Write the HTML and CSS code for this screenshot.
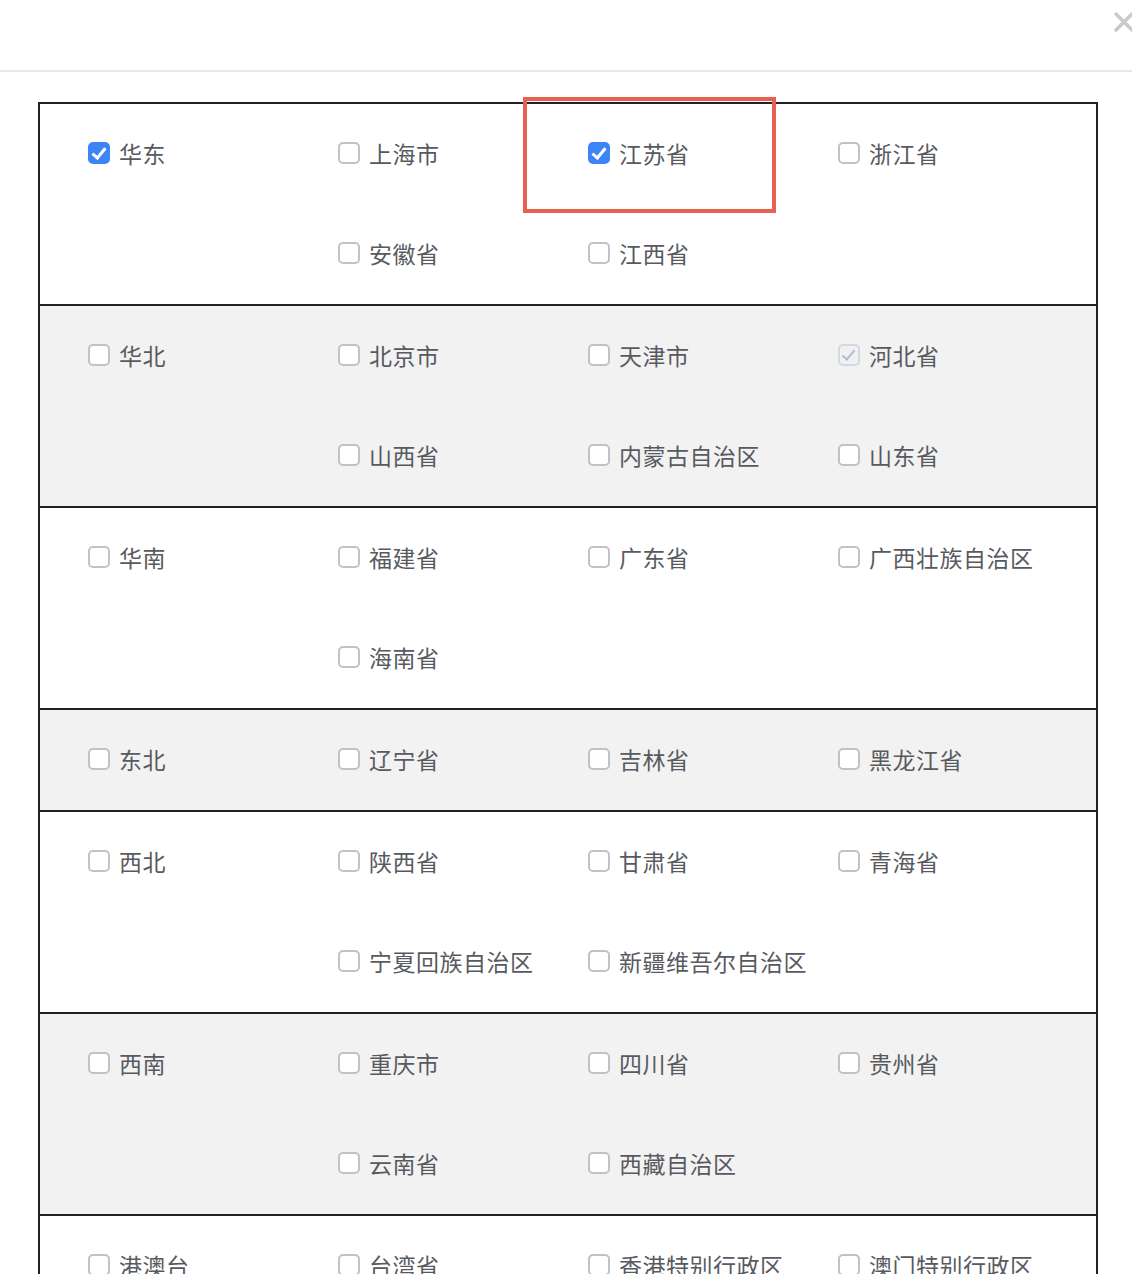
FILE: index.html
```html
<!DOCTYPE html>
<html lang="zh-CN">
<head>
  <meta charset="UTF-8">
  <meta name="viewport" content="width=device-width, initial-scale=1.0">
  <title>选择地区</title>
  <link rel="stylesheet" href="styles.css">
</head>
<body>

  <header class="dialog-header">
    <button class="close" aria-label="关闭">
      <svg width="22" height="22" viewBox="0 0 22 22">
        <path d="M3 3 L19 19 M19 3 L3 19" stroke="#c8c9cc" stroke-width="3.4" stroke-linecap="round" fill="none"/>
      </svg>
    </button>
  </header>

  <main class="dialog-body">
    <div class="regions">

      <section class="region">
        <label class="item"><span class="box checked"></span>华东</label>
        <div class="provinces">
          <label class="item"><span class="box"></span>上海市</label>
          <label class="item marked"><span class="box checked"></span>江苏省</label>
          <label class="item"><span class="box"></span>浙江省</label>
          <label class="item"><span class="box"></span>安徽省</label>
          <label class="item"><span class="box"></span>江西省</label>
        </div>
      </section>

      <section class="region">
        <label class="item"><span class="box"></span>华北</label>
        <div class="provinces">
          <label class="item"><span class="box"></span>北京市</label>
          <label class="item"><span class="box"></span>天津市</label>
          <label class="item"><span class="box checked disabled"></span>河北省</label>
          <label class="item"><span class="box"></span>山西省</label>
          <label class="item"><span class="box"></span>内蒙古自治区</label>
          <label class="item"><span class="box"></span>山东省</label>
        </div>
      </section>

      <section class="region">
        <label class="item"><span class="box"></span>华南</label>
        <div class="provinces">
          <label class="item"><span class="box"></span>福建省</label>
          <label class="item"><span class="box"></span>广东省</label>
          <label class="item"><span class="box"></span>广西壮族自治区</label>
          <label class="item"><span class="box"></span>海南省</label>
        </div>
      </section>

      <section class="region">
        <label class="item"><span class="box"></span>东北</label>
        <div class="provinces">
          <label class="item"><span class="box"></span>辽宁省</label>
          <label class="item"><span class="box"></span>吉林省</label>
          <label class="item"><span class="box"></span>黑龙江省</label>
        </div>
      </section>

      <section class="region">
        <label class="item"><span class="box"></span>西北</label>
        <div class="provinces">
          <label class="item"><span class="box"></span>陕西省</label>
          <label class="item"><span class="box"></span>甘肃省</label>
          <label class="item"><span class="box"></span>青海省</label>
          <label class="item"><span class="box"></span>宁夏回族自治区</label>
          <label class="item"><span class="box"></span>新疆维吾尔自治区</label>
        </div>
      </section>

      <section class="region">
        <label class="item"><span class="box"></span>西南</label>
        <div class="provinces">
          <label class="item"><span class="box"></span>重庆市</label>
          <label class="item"><span class="box"></span>四川省</label>
          <label class="item"><span class="box"></span>贵州省</label>
          <label class="item"><span class="box"></span>云南省</label>
          <label class="item"><span class="box"></span>西藏自治区</label>
        </div>
      </section>

      <section class="region">
        <label class="item"><span class="box"></span>港澳台</label>
        <div class="provinces">
          <label class="item"><span class="box"></span>台湾省</label>
          <label class="item"><span class="box"></span>香港特别行政区</label>
          <label class="item"><span class="box"></span>澳门特别行政区</label>
        </div>
      </section>

    </div>
  </main>

</body>
</html>
```

FILE: styles.css
```css
body {
  margin: 0;
  background-color: #fff;
  font-family: "Noto Sans CJK SC", "Noto Sans", sans-serif;
  color: #585a5f;
  overflow: hidden;
}
.dialog-header {
  height: 70px;
  border-bottom: 2px solid #e8e8e8;
  display: flex;
  justify-content: flex-end;
  align-items: flex-start;
}
.close {
  margin: 11px -3px 0 0;
  padding: 0;
  border: none;
  background: none;
  cursor: pointer;
}
.dialog-body {
  padding: 30px 34px 0 38px;
}
.regions {
  border: 2px solid #222;
  border-bottom: none;
}
.region {
  display: grid;
  grid-template-columns: 250px 750px;
  padding-left: 48px;
  border-bottom: 2px solid #222;
}
.region:nth-child(even) {
  background-color: #f2f2f2;
}
.provinces {
  display: grid;
  grid-template-columns: repeat(3, 250px);
}
.item {
  position: relative;
  box-sizing: border-box;
  height: 100px;
  padding-bottom: 3px;
  display: flex;
  align-items: center;
  font-size: 23px;
  letter-spacing: 0.5px;
  white-space: nowrap;
  cursor: pointer;
}
.box {
  position: relative;
  box-sizing: border-box;
  width: 22px;
  height: 22px;
  margin-right: 9px;
  border: 2px solid #c0c2c7;
  border-radius: 5px;
  background-color: #fff;
  flex: none;
}
.box.checked {
  background-color: #3d84f5;
  border-color: #3d84f5;
}
.box.checked::after {
  content: "";
  position: absolute;
  left: 5px;
  top: 1px;
  width: 5px;
  height: 11px;
  border: solid #fff;
  border-width: 0 3px 3px 0;
  transform: rotate(40deg);
}
.box.disabled {
  background-color: #eef1f6;
  border-color: #d6d8dd;
}
.box.disabled::after {
  border-color: #b8bbc1;
  border-width: 0 2px 2px 0;
}
.marked::after {
  content: "";
  position: absolute;
  left: -65px;
  top: -7px;
  width: 253px;
  height: 116px;
  box-sizing: border-box;
  border: 4px solid #e8604f;
  pointer-events: none;
}
```
